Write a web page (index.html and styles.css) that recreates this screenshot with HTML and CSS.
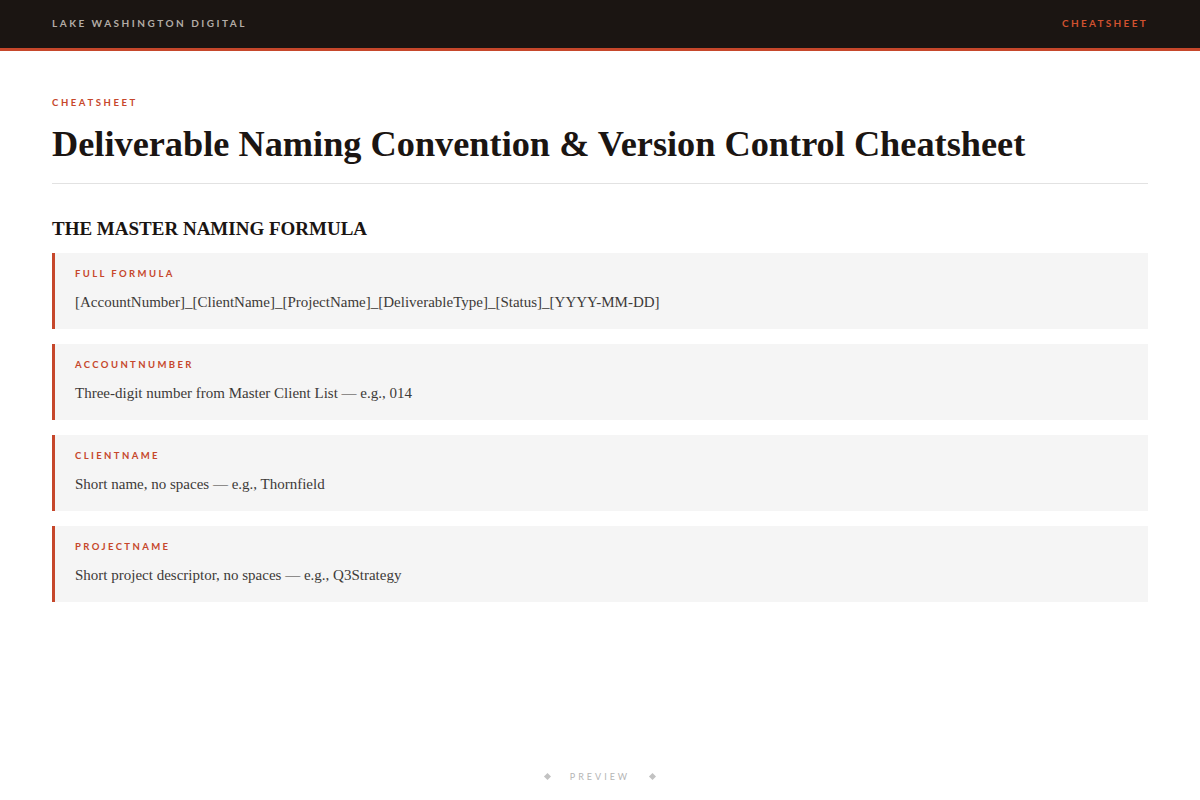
FILE: index.html
```html
<!DOCTYPE html>
<html lang="en">
<head>
<meta charset="utf-8">
<title>Deliverable Naming Convention &amp; Version Control Cheatsheet</title>
<link rel="stylesheet" href="styles.css">
</head>
<body>
<div class="page">
  <header class="topbar">
    <span class="brand">Lake Washington Digital</span>
    <span class="nav-tag">Cheatsheet</span>
  </header>
  <main class="content">
    <div class="eyebrow">Cheatsheet</div>
    <h1 class="title">Deliverable Naming Convention &amp; Version Control Cheatsheet</h1>
    <h2 class="section-title">The Master Naming Formula</h2>
    <div class="cards">
      <div class="card">
        <div class="card-label">Full Formula</div>
        <div class="card-text">[AccountNumber]_[ClientName]_[ProjectName]_[DeliverableType]_[Status]_[YYYY-MM-DD]</div>
      </div>
      <div class="card">
        <div class="card-label">AccountNumber</div>
        <div class="card-text">Three-digit number from Master Client List — e.g., 014</div>
      </div>
      <div class="card">
        <div class="card-label">ClientName</div>
        <div class="card-text">Short name, no spaces — e.g., Thornfield</div>
      </div>
      <div class="card">
        <div class="card-label">ProjectName</div>
        <div class="card-text">Short project descriptor, no spaces — e.g., Q3Strategy</div>
      </div>
    </div>
  </main>
  <footer class="footer">
    <span class="diamond"></span>
    <span class="footer-text">Preview</span>
    <span class="diamond"></span>
  </footer>
</div>
</body>
</html>
```
FILE: styles.css
```css
html, body {
  margin: 0;
  padding: 0;
  background: #ffffff;
}
.page {
  min-height: 100vh;
  display: flex;
  flex-direction: column;
}
.topbar {
  height: 51px;
  box-sizing: border-box;
  padding: 0 52px 2px;
  background: #1b1512;
  border-bottom: 3px solid #c6472b;
  display: flex;
  align-items: center;
  justify-content: space-between;
  font-family: Lato, "DejaVu Sans", sans-serif;
  font-size: 10px;
  font-weight: 700;
  letter-spacing: 2.5px;
  text-transform: uppercase;
}
.brand {
  color: #b3aca6;
}
.nav-tag {
  color: #d0512f;
  letter-spacing: 2.3px;
}
.content {
  padding: 0 52px;
}
.eyebrow {
  margin-top: 46px;
  font-family: Lato, "DejaVu Sans", sans-serif;
  font-size: 9.5px;
  font-weight: 700;
  letter-spacing: 2.6px;
  text-transform: uppercase;
  color: #c6472b;
  line-height: 12px;
}
.title {
  margin: 11px 0 0;
  padding-bottom: 15px;
  border-bottom: 1px solid #e2e2e2;
  font-family: "Liberation Serif", "DejaVu Serif", serif;
  font-weight: 700;
  font-size: 36.3px;
  line-height: 48px;
  color: #1b1512;
}
.section-title {
  margin: 32px 0 0;
  font-family: "Liberation Serif", "DejaVu Serif", serif;
  font-weight: 700;
  font-size: 19px;
  line-height: 26px;
  color: #1b1512;
  text-transform: uppercase;
}
.cards {
  margin-top: 11px;
  display: flex;
  flex-direction: column;
  gap: 15px;
}
.card {
  background: #f5f5f5;
  border-left: 3px solid #c6472b;
  height: 76px;
  box-sizing: border-box;
  padding: 15px 20px 0;
}
.card-label {
  font-family: Lato, "DejaVu Sans", sans-serif;
  font-size: 9.5px;
  font-weight: 700;
  letter-spacing: 2.4px;
  text-transform: uppercase;
  color: #c6472b;
  line-height: 12px;
}
.card-text {
  margin-top: 12px;
  font-family: "Liberation Serif", "DejaVu Serif", serif;
  font-size: 15px;
  line-height: 20px;
  color: #3d3a38;
}
.footer {
  margin-top: auto;
  height: 48px;
  display: flex;
  align-items: center;
  justify-content: center;
  gap: 20px;
}
.footer-text {
  font-family: Lato, "DejaVu Sans", sans-serif;
  font-size: 9px;
  letter-spacing: 3px;
  text-transform: uppercase;
  color: #b5b5b5;
}
.diamond {
  width: 5px;
  height: 5px;
  background: #c2c2c2;
  transform: rotate(45deg);
}
```
